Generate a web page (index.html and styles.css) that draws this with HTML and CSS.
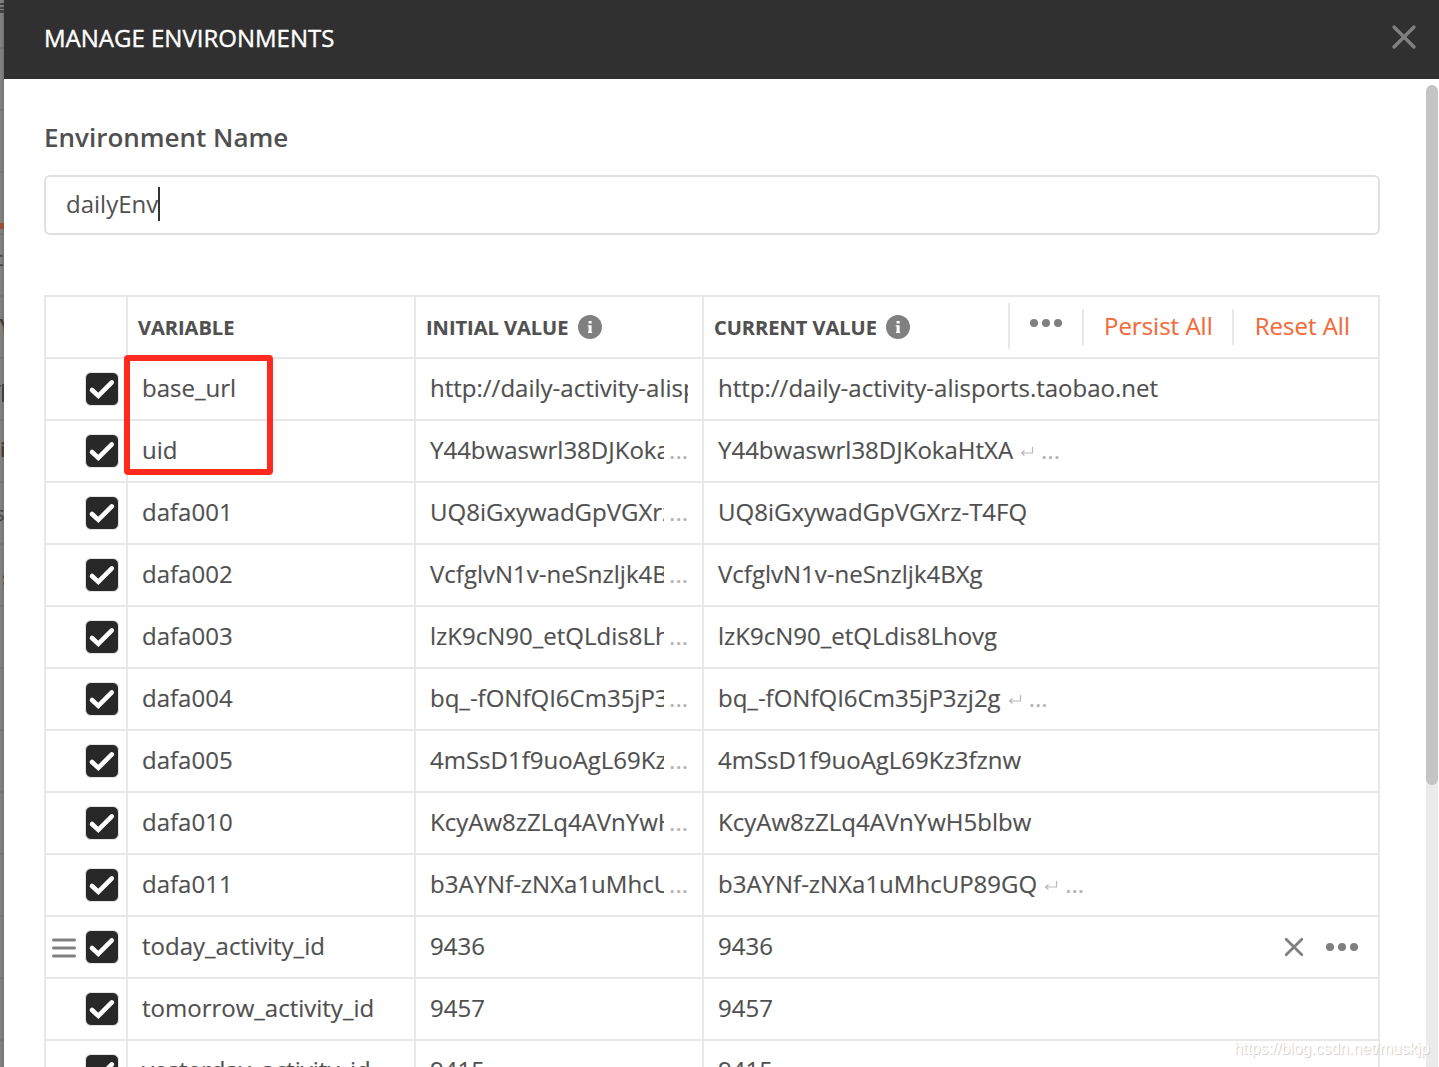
FILE: index.html
```html
<!DOCTYPE html>
<html lang="en">
<head>
<meta charset="utf-8">
<title>Manage Environments</title>
<link rel="stylesheet" href="styles.css">
</head>
<body>
<svg class="defs" width="0" height="0" aria-hidden="true">
  <symbol id="check" viewBox="0 0 32 32"><path d="M6 17 12.3 22.9 25.8 9.4" fill="none" stroke="#fff" stroke-width="4.6" stroke-linecap="round" stroke-linejoin="miter"/></symbol>
  <symbol id="info" viewBox="0 0 24 24"><circle cx="12" cy="12" r="12" fill="#808080"/><path d="M10.6 6h3v2.6h-3zM9.8 10.2h3.8v6.6h.6v1.2H10v-1.2h.6v-5.4h-.8z" fill="#fff"/></symbol>
  <symbol id="dots" viewBox="0 0 32 8"><g fill="#808080"><circle cx="4" cy="4" r="4"/><circle cx="16" cy="4" r="4"/><circle cx="28" cy="4" r="4"/></g></symbol>
  <symbol id="return" viewBox="0 0 14 10"><path d="M12.5 1v6H2M4.5 4.5 1.5 7l3 2.5" fill="none" stroke="#b8b8b8" stroke-width="1.2"/></symbol>
</svg>
<div class="app">
  <div class="backdrop">
    <i class="bar b1"></i><i class="bar b2"></i><i class="bar b3"></i><i class="tab"></i>
    <span class="g1">c</span><span class="g2">Y</span><span class="g3">T</span><i class="stem"></i><span class="g4">i</span><span class="g5">s</span><span class="g6">s</span>
  </div>
  <main class="modal">
    <header class="head">
      <h1>MANAGE ENVIRONMENTS</h1>
      <svg class="close" viewBox="0 0 26 26"><path d="M3 3 23 23M23 3 3 23" stroke="#808080" stroke-width="3.4" stroke-linecap="round"/></svg>
    </header>
    <div class="body">
      <section class="content">
        <label class="label"><span class="t">Environment Name</span></label>
        <div class="field"><span class="value">dailyEnv</span><i class="caret"></i></div>
        <div class="table">
          <div class="row th">
            <div></div>
            <div><span>VARIABLE</span></div>
            <div><span>INITIAL VALUE</span><svg class="info"><use href="#info"/></svg></div>
            <div class="last"><span>CURRENT VALUE</span><svg class="info near"><use href="#info"/></svg>
              <div class="actions"><svg class="dots"><use href="#dots"/></svg><a class="persist">Persist All</a><a class="reset">Reset All</a></div></div>
          </div>
          <div class="row"><div><svg class="box"><use href="#check"/></svg></div><div>base_url</div><div><span class="clip">http://daily-activity-alisports</span></div><div>http://daily-activity-alisports.taobao.net</div></div>
          <div class="row"><div><svg class="box"><use href="#check"/></svg></div><div>uid</div><div><span class="clip">Y44bwaswrl38DJKokaHtXA</span><b>...</b></div><div>Y44bwaswrl38DJKokaHtXA<svg class="ret"><use href="#return"/></svg><b>...</b></div></div>
          <div class="row"><div><svg class="box"><use href="#check"/></svg></div><div>dafa001</div><div><span class="clip">UQ8iGxywadGpVGXrz-T4FQ</span><b>...</b></div><div>UQ8iGxywadGpVGXrz-T4FQ</div></div>
          <div class="row"><div><svg class="box"><use href="#check"/></svg></div><div>dafa002</div><div><span class="clip">VcfglvN1v-neSnzljk4BXg</span><b>...</b></div><div>VcfglvN1v-neSnzljk4BXg</div></div>
          <div class="row"><div><svg class="box"><use href="#check"/></svg></div><div>dafa003</div><div><span class="clip">lzK9cN90_etQLdis8Lhovg</span><b>...</b></div><div>lzK9cN90_etQLdis8Lhovg</div></div>
          <div class="row"><div><svg class="box"><use href="#check"/></svg></div><div>dafa004</div><div><span class="clip">bq_-fONfQI6Cm35jP3zj2g</span><b>...</b></div><div>bq_-fONfQI6Cm35jP3zj2g<svg class="ret"><use href="#return"/></svg><b>...</b></div></div>
          <div class="row"><div><svg class="box"><use href="#check"/></svg></div><div>dafa005</div><div><span class="clip">4mSsD1f9uoAgL69Kz3fznw</span><b>...</b></div><div>4mSsD1f9uoAgL69Kz3fznw</div></div>
          <div class="row"><div><svg class="box"><use href="#check"/></svg></div><div>dafa010</div><div><span class="clip">KcyAw8zZLq4AVnYwH5blbw</span><b>...</b></div><div>KcyAw8zZLq4AVnYwH5blbw</div></div>
          <div class="row"><div><svg class="box"><use href="#check"/></svg></div><div>dafa011</div><div><span class="clip">b3AYNf-zNXa1uMhcUP89GQ</span><b>...</b></div><div>b3AYNf-zNXa1uMhcUP89GQ<svg class="ret"><use href="#return"/></svg><b>...</b></div></div>
          <div class="row"><div><svg class="grip" viewBox="0 0 24 20"><path d="M1.5 2h21M1.5 10h21M1.5 18h21" stroke="#808080" stroke-width="3" stroke-linecap="round"/></svg><svg class="box"><use href="#check"/></svg></div><div>today_activity_id</div><div>9436</div><div>9436<span class="tools"><svg class="del" viewBox="0 0 20 20"><path d="M2.2 2.2 17.8 17.8M17.8 2.2 2.2 17.8" stroke="#808080" stroke-width="2.8" stroke-linecap="round"/></svg><svg class="dots"><use href="#dots"/></svg></span></div></div>
          <div class="row"><div><svg class="box"><use href="#check"/></svg></div><div>tomorrow_activity_id</div><div>9457</div><div>9457</div></div>
          <div class="row"><div><svg class="box"><use href="#check"/></svg></div><div>yesterday_activity_id</div><div>9415</div><div>9415</div></div>
          <div class="mark"></div>
        </div>
      </section>
      <div class="scroll"><i></i></div>
    </div>
  </main>
  <div class="watermark">https://blog.csdn.net/muskjp</div>
</div>
</body>
</html>
```
FILE: styles.css
```css
* { box-sizing: border-box; }
body { margin: 0; overflow: hidden; font-family: "Open Sans", "Noto Sans", sans-serif; font-size: 24px; color: #505050; background: #fff; }
svg { display: block; flex: none; }
.defs { position: absolute; }
.app { position: relative; display: flex; width: 1439px; height: 1067px; overflow: hidden; }
.backdrop { position: relative; flex: none; width: 4px; overflow: hidden; background: repeating-linear-gradient(#0000 0 47px, #6a6a6a66 47px 49px, #0000 49px 62px), linear-gradient(90deg, #858483, #747372); }
.backdrop i, .backdrop span { position: absolute; left: 0; }
.bar { width: 4px; height: 2px; background: #444; }
.b1 { top: 3px; } .b2 { top: 7px; } .b3 { top: 10px; height: 3px; }
.tab { top: 223px; width: 4px; height: 6px; background: #984f32; }
.backdrop .stem { top: 384px; left: 2px; width: 2px; height: 18px; background: #40403f; }
.backdrop span { font-size: 20px; line-height: 24px; color: #40403f; }
.backdrop .g1 { top: 247px; left: -6px; }
.backdrop .g2 { top: 314px; left: -1px; font-weight: 700; }
.backdrop .g3 { top: 380px; left: -10px; }
.backdrop .g4 { top: 438px; left: 0; font-weight: 700; }
.backdrop .g5 { top: 502px; left: -5px; }
.backdrop .g6 { top: 566px; left: 2px; }
.modal { display: flex; flex-direction: column; flex: 1; min-width: 0; background: #fff; }
.head { display: flex; align-items: center; justify-content: space-between; flex: none; height: 79px; padding: 0 22px 4px 40px; background: #303030; }
h1 { margin: 0; color: #fff; font-size: 24px; font-weight: 400; line-height: 34px; white-space: nowrap; -webkit-text-stroke: .4px #fff; }
.close { width: 26px; height: 26px; margin-bottom: 1px; }
.body { display: flex; flex: 1; min-height: 0; overflow: hidden; }
.content { display: flex; flex-direction: column; flex: none; width: 1376px; padding: 40px 0 0 40px; }
.label { flex: none; height: 56px; font-size: 26px; font-weight: 600; line-height: 36px; }
.field { display: flex; flex: none; align-items: center; height: 60px; padding: 0 20px 2px; border: 2px solid #e0e0e0; border-radius: 6px; }
.value { padding-bottom: 2px; }
.caret { width: 2px; height: 34px; background: #333; }
.table { position: relative; display: flex; flex: none; flex-direction: column; margin-top: 60px; border: 2px solid #e8e8e8; border-bottom: 0; -webkit-text-stroke: .15px currentColor; }
.row { display: grid; grid-template-columns: 82px 288px 288px 1fr; flex: none; height: 62px; border-bottom: 2px solid #e8e8e8; line-height: 34px; white-space: nowrap; }
.row > div { display: flex; align-items: center; min-width: 0; padding: 0 14px 2px; border-right: 2px solid #e8e8e8; }
.row > div:first-child { justify-content: flex-end; padding: 0 7px 0 0; }
.row > div:last-child { border-right: 0; }
.row.th > div { padding: 0 10px; font-size: 20px; font-weight: 700; }
.row.th > div:last-child { padding-right: 9px; }
.row.th > div > span { padding-top: 2px; }
.info { width: 24px; height: 24px; margin-left: 10px; }
.info.near { margin-left: 9px; }
.box { width: 34px; height: 34px; border: 1px solid #e4e4e4; border-radius: 6px; background: #282828; }
.grip { width: 24px; height: 20px; margin: 1px 9px 0 0; }
.clip { flex: 1; min-width: 0; overflow: hidden; }
.row b { margin-left: 5px; font-weight: 400; color: #b4b4b4; }
.ret { width: 14px; height: 10px; margin: 2px 2px 0 7px; }
.dots { width: 32px; height: 8px; }
.tools { display: flex; align-items: center; gap: 22px; margin-left: auto; padding: 2px 6px 0 0; }
.del { width: 20px; height: 20px; }
.actions { display: flex; align-items: center; height: 46px; margin: 0 0 2px auto; padding-left: 20px; border-left: 2px solid #e8e8e8; font-size: 24px; font-weight: 400; color: #f26b3a; }
.actions .dots { margin: 0 20px 6px 0; }
.actions a { height: 36px; margin-top: 2px; border-left: 2px solid #e8e8e8; padding: 0 20px; line-height: 34px; }
.actions .persist { padding-right: 19px; }
.actions .reset { padding: 0 19px 0 21px; }
.mark { position: absolute; left: 78px; top: 58px; width: 149px; height: 120px; border: 6px solid #ff2a1d; border-radius: 4px; }
.scroll { width: 12px; margin-left: 46px; background: linear-gradient(#fff 350px, #ebebeb 350px); padding-top: 6px; }
.scroll i { display: block; height: 700px; border-radius: 6px; background: #c4c4c4; }
.watermark { position: absolute; left: 1234px; top: 1039px; font: 16px/20px "Liberation Sans", sans-serif; letter-spacing: -.1px; color: #fff; text-shadow: 1px 1px 1px #ccc; white-space: nowrap; }
```
